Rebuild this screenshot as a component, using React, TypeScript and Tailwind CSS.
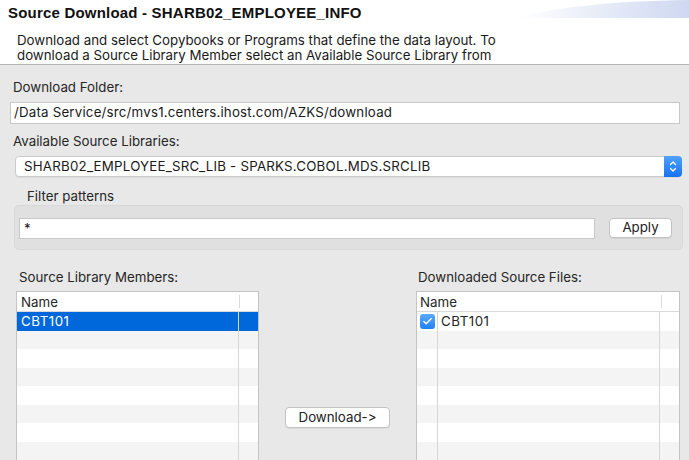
import { Check } from 'lucide-react';

const rowCount = 9;

const SourceTable = ({ withCheck }: { withCheck?: boolean }) => {
  const rows = Array.from({ length: rowCount }, (_, i) => i);
  return (
    <div className="h-[170px] overflow-hidden border border-[#c4c4c4] bg-white">
      {/* header */}
      <div className="flex h-[20px] items-center border-b border-[#d9d9d9] bg-white">
        <div
          className={`${withCheck ? 'w-[244px] pl-[3px]' : 'w-[222px] pl-[4px]'} h-full flex items-center leading-[20px]`}
        >
          Name
        </div>
        <div className="h-[13px] w-px bg-[#dadada]" />
      </div>
      {rows.map((i) => {
        const selected = !withCheck && i === 0;
        const striped = i % 2 === 1;
        const bg = selected ? 'bg-[#0068da] text-white' : striped ? 'bg-[#f4f4f4]' : 'bg-white';
        return (
          <div key={i} className={`flex h-[18.5px] ${bg}`}>
            {withCheck && (
              <div className="flex w-[21px] items-center justify-center border-r border-[#d6d6d6]">
                {i === 0 && (
                  <div className="flex h-[15px] w-[15px] items-center justify-center rounded-[3px] bg-gradient-to-b from-[#5aa9fb] to-[#1f80f4]">
                    <Check className="h-[11px] w-[11px] text-white" strokeWidth={3} />
                  </div>
                )}
              </div>
            )}
            <div
              className={`${withCheck ? 'w-[222px] pl-[3px]' : 'w-[222px] pl-[4px]'} flex items-center border-r border-[#d6d6d6] leading-[18px] tracking-[0.5px]`}
            >
              {i === 0 ? 'CBT101' : ''}
            </div>
            <div className="flex-1" />
          </div>
        );
      })}
    </div>
  );
};

const MacButton = ({ label, className }: { label: string; className: string }) => (
  <button
    className={`flex items-center justify-center rounded-[4px] border border-[#c3c3c3] bg-white text-[13.3px] text-[#222] shadow-[0_1px_0_rgba(0,0,0,0.06)] ${className}`}
  >
    {label}
  </button>
);

export default function App() {
  return (
    <div className="h-[460px] w-[689px] overflow-hidden bg-[#e8e8e8] font-['Inter','Liberation_Sans',Arial,sans-serif] text-[13.3px] text-[#262626] [font-feature-settings:'calt'_0,'liga'_0]">
      {/* banner */}
      <div className="relative h-[65px] border-b border-[#b3b3b3] bg-white">
        <svg className="absolute right-0 top-0" width="170" height="18" viewBox="0 0 170 18">
          <defs>
            <linearGradient id="banner" x1="0" y1="0" x2="1" y2="0">
              <stop offset="0" stopColor="#ffffff" />
              <stop offset="0.4" stopColor="#ebeff9" />
              <stop offset="1" stopColor="#cfd8f1" />
            </linearGradient>
          </defs>
          <path d="M 0 18 C 30 8, 90 1, 170 0 L 170 18 Z" fill="url(#banner)" />
        </svg>
        <div className="relative pl-[8px] pt-[4px] font-['Liberation_Sans',Arial,sans-serif] text-[15px] font-bold leading-[18px] tracking-[0.2px] text-[#111]">
          Source Download - SHARB02_EMPLOYEE_INFO
        </div>
        <div className="mt-[11px] whitespace-nowrap pl-[17px] leading-[15px] text-[#1a1a1a]">
          Download and select Copybooks or Programs that define the data layout. To
          <br />
          download a Source Library Member select an Available Source Library from
        </div>
      </div>

      {/* body */}
      <div className="pl-[13px] pt-[14px] leading-[16px]">Download Folder:</div>
      <div className="ml-[10px] mt-[7px] flex h-[22px] w-[670px] items-center border border-[#c8c8c8] bg-white pl-[3px] tracking-[0.2px] text-[#1a1a1a]">
        /Data Service/src/mvs1.centers.ihost.com/AZKS/download
      </div>

      <div className="pl-[13px] pt-[9px] leading-[16px]">Available Source Libraries:</div>
      <div className="ml-[15px] mt-[7px] flex h-[21px] w-[667px] items-center rounded-[4px] border border-[#cbcbcb] bg-white shadow-[0_1px_0_rgba(0,0,0,0.05)]">
        <div className="flex-1 pl-[8px] tracking-[0.22px] text-[#1a1a1a]">SHARB02_EMPLOYEE_SRC_LIB - SPARKS.COBOL.MDS.SRCLIB</div>
        <div className="-mr-px -my-px flex h-[21px] w-[18px] items-center justify-center rounded-r-[4px] bg-gradient-to-b from-[#4fa3fc] to-[#1372f0]">
          <svg width="8" height="13" viewBox="0 0 8 13" fill="none" stroke="white" strokeWidth="1.4" strokeLinecap="round" strokeLinejoin="round">
            <path d="M1.5 4.5 L4 2 L6.5 4.5" />
            <path d="M1.5 8.5 L4 11 L6.5 8.5" />
          </svg>
        </div>
      </div>

      <div className="pl-[27px] pt-[11px] leading-[16px]">Filter patterns</div>
      <div className="ml-[14px] mt-px flex h-[45px] w-[669px] items-start rounded-[5px] border border-[#d8d8d8] bg-[#e0e0e0] pl-[4px] pt-[12px]">
        <div className="flex h-[21px] w-[576px] items-center border border-[#c8c8c8] bg-white pl-[4px] text-[#1a1a1a]">*</div>
        <MacButton label="Apply" className="ml-[14px] h-[20px] w-[63px]" />
      </div>

      <div className="mt-[19px] flex">
        <div className="ml-[16px] w-[243px]">
          <div className="pl-[3px] leading-[16px]">Source Library Members:</div>
          <div className="mt-[6px]">
            <SourceTable />
          </div>
        </div>
        <div className="flex flex-1 items-start justify-center pt-[138px]">
          <MacButton label="Download->" className="h-[21px] w-[105px]" />
        </div>
        <div className="mr-[9px] w-[264px]">
          <div className="pl-[2px] leading-[16px]">Downloaded Source Files:</div>
          <div className="mt-[6px]">
            <SourceTable withCheck />
          </div>
        </div>
      </div>
    </div>
  );
}
